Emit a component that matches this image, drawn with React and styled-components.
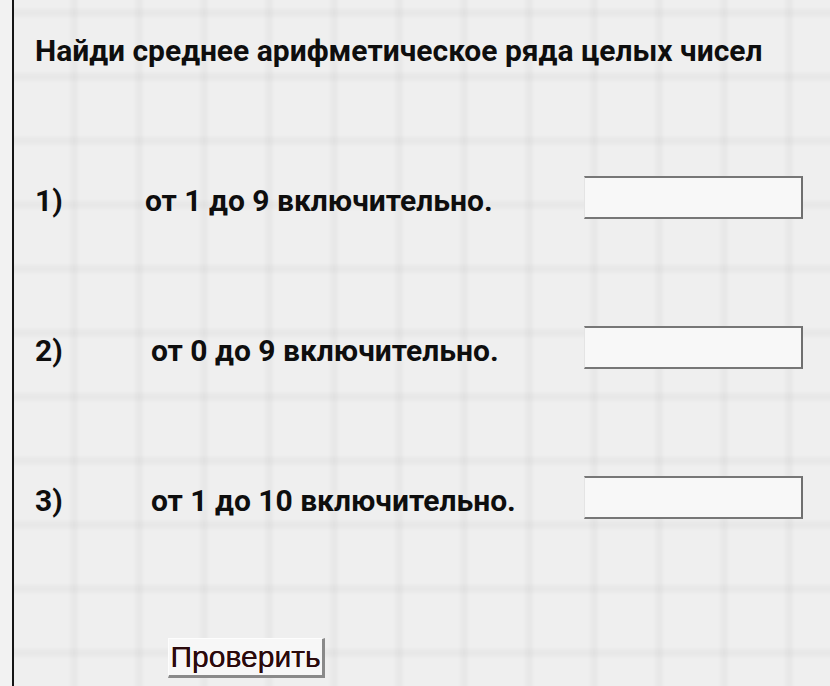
import React from "react";
import styled, { createGlobalStyle } from "styled-components";

const Global = createGlobalStyle`
  html, body { margin: 0; padding: 0; }
  body {
    width: 830px;
    height: 686px;
    overflow: hidden;
    background: #eeeeee;
  }
`;

const Page = styled.div`
  width: 830px;
  height: 686px;
  display: flex;
  background-color: #efefef;
  background-image:
    linear-gradient(90deg, rgba(0,0,0,0.032) 0, rgba(0,0,0,0.02) 3px, rgba(0,0,0,0) 6px, rgba(0,0,0,0) 59px, rgba(0,0,0,0.02) 62px, rgba(0,0,0,0.032) 65px),
    linear-gradient(0deg, rgba(0,0,0,0.03) 0, rgba(0,0,0,0.018) 3px, rgba(0,0,0,0) 6px, rgba(0,0,0,0) 58px, rgba(0,0,0,0.018) 61px, rgba(0,0,0,0.03) 64px);
  background-size: 65px 100%, 100% 64px;
  background-position: 9px 0, 0 13px;
`;

const Margin = styled.div`
  width: 12px;
  flex: none;
  background: #f2f2f2;
  border-right: 2px solid #151515;
`;

const Sheet = styled.div`
  flex: 1;
  display: flex;
  flex-direction: column;
  padding: 33px 0 0 21px;
  font-family: Roboto, "Noto Sans", sans-serif;
  color: #0e0e0e;
`;

const Title = styled.h1`
  margin: 0;
  font-size: 30px;
  line-height: 36px;
  font-weight: 700;
  white-space: nowrap;
`;

const Rows = styled.div`
  display: flex;
  flex-direction: column;
  gap: 107px;
  margin-top: 107px;
`;

const Row = styled.div`
  display: flex;
  align-items: center;
  height: 43px;
`;

const Num = styled.span`
  font-size: 30px;
  font-weight: 700;
  width: ${(p) => p.$indent}px;
  flex: none;
  padding-top: 6px;
`;

const Task = styled.span`
  font-size: 30px;
  font-weight: 700;
  white-space: nowrap;
  flex: 1;
  padding-top: 6px;
`;

const Answer = styled.input`
  width: 219px;
  height: 43px;
  box-sizing: border-box;
  margin-right: 27px;
  background: #f8f8f8;
  border: none;
  border-top: 2px solid #777;
  border-bottom: 2px solid #777;
  border-right: 2px solid #6f6f6f;
  border-left: 1px solid #e4e4e4;
  outline: none;
  font-size: 20px;
`;

const ButtonBar = styled.div`
  margin-top: 119px;
  padding-left: 133px;
`;

const Check = styled.button`
  width: 157px;
  height: 40px;
  padding: 0;
  box-sizing: border-box;
  background: #f7f7f7;
  border: none;
  border-left: 1px solid #fdfdfd;
  border-top: 1px solid #fdfdfd;
  border-right: 3px solid #8a8a8a;
  border-bottom: 3px solid #8a8a8a;
  font-family: "Liberation Sans", Arial, sans-serif;
  font-size: 30px;
  color: #2b0a0c;
  line-height: 36px;
  text-align: center;
  white-space: nowrap;
  text-shadow: 0 0 0.6px #2b0a0c;
`;

const tasks = [
  { n: "1)", text: "от 1 до 9 включительно.", indent: 110 },
  { n: "2)", text: "от 0 до 9 включительно.", indent: 116 },
  { n: "3)", text: "от 1 до 10 включительно.", indent: 116 },
];

export default function App() {
  return (
    <>
      <Global />
      <Page>
        <Margin />
        <Sheet>
          <Title>Найди среднее арифметическое ряда целых чисел</Title>
          <Rows>
            {tasks.map((t) => (
              <Row key={t.n}>
                <Num $indent={t.indent}>{t.n}</Num>
                <Task>{t.text}</Task>
                <Answer type="text" />
              </Row>
            ))}
          </Rows>
          <ButtonBar>
            <Check>Проверить</Check>
          </ButtonBar>
        </Sheet>
      </Page>
    </>
  );
}
